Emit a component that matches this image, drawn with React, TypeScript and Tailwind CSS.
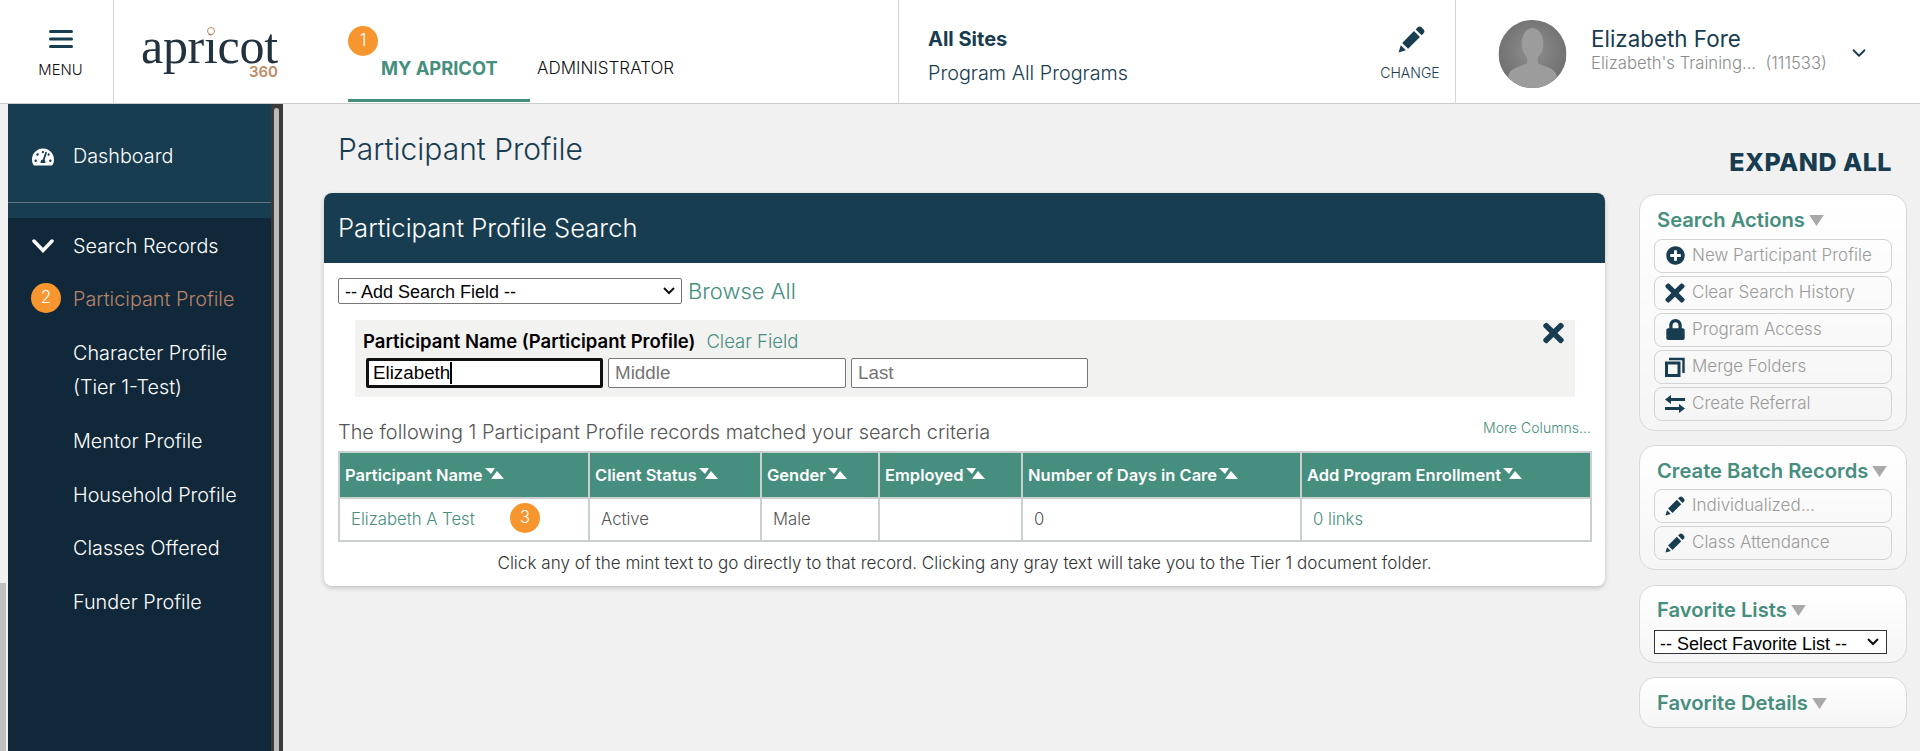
import React from "react";
import { FaLock, FaPlusCircle, FaTachometerAlt, FaTimes } from "react-icons/fa";
import { LuChevronDown } from "react-icons/lu";

const Badge = ({ n, className = "" }: { n: number; className?: string }) => (
  <span className={`flex h-[30px] w-[30px] shrink-0 items-center justify-center rounded-full bg-[#f7962f] text-[17px] font-light text-white ${className}`}>
    {n}
  </span>
);

const SortIcon = () => (
  <svg viewBox="0 0 19 11" className="ml-[2px] inline-block h-[11px] w-[19px] align-[2px]">
    <polygon points="0,0 10,0 6,6" fill="#fff" />
    <polygon points="12,3 19,11 6,11" fill="#fff" />
  </svg>
);

const Caret = () => (
  <svg viewBox="0 0 16 12" className="ml-[4px] inline-block h-[11px] w-[15px] align-[1px]">
    <polygon points="0,0 16,0 8,12" fill="#a9a9a9" />
  </svg>
);

const PencilIcon = ({ className = "" }: { className?: string }) => (
  <svg viewBox="0 0 24 24" className={className} fill="#183c50">
    <polygon points="0.500,23.500 2.500,17 7,21.500" />
    <polygon points="3.700,15 14.200,4.500 19.500,9.800 9,20.300" />
    <path d="M15.700 3l1.800-1.800c1-1 2.400-1 3.300 0l2 2c1 1 1 2.300 0 3.300l-1.800 1.800z" />
  </svg>
);

const MergeIcon = () => (
  <svg viewBox="0 0 20 20" className="h-[20px] w-[20px]" fill="none" stroke="#183c50">
    <path d="M4 2h14.500v14" strokeWidth="2.400" />
    <rect x="1.500" y="6" width="12.500" height="12.500" strokeWidth="3" />
  </svg>
);

const SwapIcon = () => (
  <svg viewBox="0 0 20 20" className="h-[20px] w-[20px]" fill="#183c50">
    <path d="M6 1v3h14v3H6v3L0 5.500z" />
    <path d="M14 10v3H0v3h14v3l6-4.500z" />
  </svg>
);

const SelectChevron = ({ className = "" }: { className?: string }) => (
  <svg viewBox="0 0 12 8" className={`pointer-events-none absolute h-[8px] w-[12px] ${className}`} fill="none" stroke="#111" strokeWidth="2">
    <polyline points="1,1 6,6 11,1" />
  </svg>
);

const Avatar = () => (
  <svg viewBox="0 0 69 69" className="h-[68px] w-[69px] shrink-0">
    <defs>
      <radialGradient id="av" cx="50%" cy="45%" r="60%">
        <stop offset="0%" stopColor="#8e8e8e" />
        <stop offset="100%" stopColor="#6d6d6d" />
      </radialGradient>
      <clipPath id="avc">
        <circle cx="34.500" cy="34.500" r="34.500" />
      </clipPath>
    </defs>
    <g clipPath="url(#avc)">
      <rect width="69" height="69" fill="url(#av)" />
      <ellipse cx="34.500" cy="24" rx="11" ry="16" fill="#9c9c9c" />
      <path d="M29 36h11v8c6 3 17 5 19 12v13H10V56c2-7 13-9 19-12z" fill="#9c9c9c" />
    </g>
  </svg>
);

const Logo = () => (
  <div className="relative h-[50px] w-[137px]">
    <span className="absolute left-0 top-0 font-['Liberation_Serif',serif] text-[50px] leading-[38px] tracking-[-0.3px] text-[#22333f]">apricot</span>
    <span className="absolute left-[66px] top-0 h-[8px] w-[8px] rounded-full border-[1.500px] border-[#c08a63] bg-white" />
    <span className="absolute right-0 top-[39px] text-[15px] font-semibold leading-[11px] text-[#c08a63]">360</span>
  </div>
);

const TopBar = () => (
  <header className="flex h-[104px] shrink-0 border-b border-[#cccccc] bg-white pl-2 font-['Inter',sans-serif]">
    <div className="flex w-[106px] flex-col items-center border-r border-[#d5d5d5] pt-[30px]">
      <svg viewBox="0 0 24 18" className="h-[18px] w-[24px]" fill="#183c50">
        <rect width="24" height="3" rx="1.500" />
        <rect y="7.500" width="24" height="3" rx="1.500" />
        <rect y="15" width="24" height="3" rx="1.500" />
      </svg>
      <span className="mt-[13px] text-[14.800px] font-light leading-[18px] text-[#111]">MENU</span>
    </div>
    <div className="flex w-[234px] pl-[27px] pt-[27px]">
      <Logo />
    </div>
    <nav className="relative flex w-[550px] items-start">
      <div className="h-[102px] w-[182px] border-b-[3px] border-[#468e7d] pl-[33px] pt-[58px] text-[18.300px] font-bold leading-[20px] text-[#468e7d]">MY APRICOT</div>
      <Badge n={1} className="absolute left-0 top-[26px]" />
      <div className="pl-[7px] pt-[58px] text-[17px] font-light leading-[20px] text-[#111]">ADMINISTRATOR</div>
    </nav>
    <div className="flex h-[103px] w-[558px] border-x border-[#d5d5d5] pl-[29px] pr-[15px] text-[#183c50]">
      <div className="flex-1">
        <div className="pt-[28px] text-[20px] font-bold leading-[22px]">All Sites</div>
        <div className="pt-[12px] text-[19.800px] font-light leading-[22px]">Program All Programs</div>
      </div>
      <div className="flex w-[60px] flex-col items-center pt-[26px]">
        <PencilIcon className="ml-[3px] h-[27px] w-[27px]" />
        <span className="mt-[11px] text-[14px] font-light leading-[18px]">CHANGE</span>
      </div>
    </div>
    <div className="flex flex-1 items-start pl-[42px] pt-[20px]">
      <Avatar />
      <div className="ml-[24px] w-[259px]">
        <div className="pt-[6px] text-[22.400px] leading-[26px] text-[#183c50]">Elizabeth Fore</div>
        <div className="pt-[1px] text-[16.700px] font-light leading-[20px] text-[#8c8c8c]">Elizabeth's Training...&nbsp; (111533)</div>
      </div>
      <LuChevronDown className="ml-[-2px] mt-[22px] h-[22px] w-[22px] text-[#183c50]" />
    </div>
  </header>
);

const navItems = ["Mentor Profile", "Household Profile", "Classes Offered", "Funder Profile"];

const Sidebar = () => (
  <aside className="flex w-[275px] shrink-0 bg-[#3a3a3a] font-['Inter',sans-serif] text-[19.800px] font-light text-white">
    <div className="flex w-[263px] flex-col bg-[#10283a]">
      <div className="h-[114px] bg-[#183c50]">
        <div className="flex h-[99px] items-center border-b border-[#62757f] pl-[24px] pt-[7px]">
          <FaTachometerAlt className="h-[20px] w-[22px]" />
          <span className="ml-[19px]">Dashboard</span>
        </div>
      </div>
      <div className="flex h-[56px] items-center pl-[24px]">
        <svg viewBox="0 0 22 14" className="h-[14px] w-[22px]" fill="none" stroke="#fff" strokeWidth="3.500" strokeLinecap="round">
          <polyline points="2,2 11,11.500 20,2" />
        </svg>
        <span className="ml-[19px] leading-[26px]">Search Records</span>
      </div>
      <div className="flex items-center pl-[23px] pt-[6px] text-[#b98468]">
        <Badge n={2} className="mb-[3px]" />
        <span className="ml-[12px] leading-[38px]">Participant Profile</span>
      </div>
      <div className="pl-[65px] pt-[18px] leading-[34px]">
        Character Profile
        <br />
        (Tier 1-Test)
      </div>
      <ul className="pl-[65px] pt-[18px] leading-[38px]">
        {navItems.map((label) => (
          <li key={label} className="mb-[15.500px]">
            {label}
          </li>
        ))}
      </ul>
    </div>
    <div className="ml-[3px] mt-[4px] h-full w-[5px] rounded-t-full bg-[#bbbbbb]" />
  </aside>
);

const columns = [
  { title: "Participant Name", w: "w-[250px]" },
  { title: "Client Status", w: "w-[172px]" },
  { title: "Gender", w: "w-[118px]" },
  { title: "Employed", w: "w-[143px]" },
  { title: "Number of Days in Care", w: "w-[279px]" },
  { title: "Add Program Enrollment", w: "w-[290px]" },
];

const SearchCard = () => (
  <section className="ml-[16px] h-[393px] w-[1281px] overflow-hidden rounded-[8px] bg-white shadow-[0_2px_5px_rgba(0,0,0,0.2)]">
    <div className="flex h-[70px] items-center bg-[#183c50] pl-[14px] text-[25.600px] font-light text-white">Participant Profile Search</div>
    <div className="px-[14px] pt-[15px]">
      <div className="flex items-center">
        <div className="relative h-[26px] w-[344px]">
          <select className="h-full w-full appearance-none rounded-[2px] border border-[#767676] bg-white pl-[6px] font-['Liberation_Sans',sans-serif] text-[18px] text-black">
            <option>-- Add Search Field --</option>
          </select>
          <SelectChevron className="right-[7px] top-[9px]" />
        </div>
        <a className="ml-[6px] text-[22px] font-light leading-[26px] text-[#468e7d]">Browse All</a>
      </div>
      <div className="relative ml-[17px] mt-[16px] h-[77px] w-[1220px] bg-[#f2f2f1] pl-[8px] pt-[10px]">
        <div className="flex h-[22px] items-center text-[18.500px] leading-[22px]">
          <span className="font-semibold text-black">Participant Name (Participant Profile)</span>
          <a className="ml-[11px] font-light text-[#468e7d]">Clear Field</a>
        </div>
        <div className="mt-[6px] flex gap-[5px] pl-[3px] font-['Liberation_Sans',sans-serif] text-[18.800px]">
          <div className="flex h-[30px] w-[237px] items-center rounded-[2px] border-[3px] border-[#111] bg-white pl-[4px] text-black">
            Elizabeth<span className="h-[22px] w-[1.500px] bg-black" />
          </div>
          <input placeholder="Middle" className="h-[30px] w-[238px] rounded-[2px] border border-[#767676] bg-white pl-[6px] placeholder:text-[#757575]" />
          <input placeholder="Last" className="h-[30px] w-[237px] rounded-[2px] border border-[#767676] bg-white pl-[6px] placeholder:text-[#757575]" />
        </div>
        <FaTimes className="absolute right-[11px] top-[-2px] h-[30px] w-[21px] text-[#183c50]" />
      </div>
      <div className="mb-[4px] mt-[20px] flex items-end justify-between">
        <span className="text-[19.900px] font-light leading-[30px] text-[#555]">The following 1 Participant Profile records matched your search criteria</span>
        <a className="pb-[11px] text-[14.100px] font-light leading-[16px] text-[#468e7d]">More Columns...</a>
      </div>
      <table className="w-[1252px] table-fixed border-collapse text-[16.700px]">
        <thead>
          <tr className="h-[46px] bg-[#468e7d] text-left text-white">
            {columns.map((c) => (
              <th key={c.title} className={`${c.w} border-2 border-[#c9d0ce] pl-[5px] text-[16.500px] font-semibold`}>
                {c.title}
                <SortIcon />
              </th>
            ))}
          </tr>
        </thead>
        <tbody>
          <tr className="h-[43px] font-light text-[#555]">
            <td className="relative border-2 border-[#c9d0ce] pl-[11px] text-[#468e7d]">
              Elizabeth A Test
              <Badge n={3} className="absolute left-[170px] top-[4px]" />
            </td>
            <td className="border-2 border-[#c9d0ce] pl-[11px]">Active</td>
            <td className="border-2 border-[#c9d0ce] pl-[11px]">Male</td>
            <td className="border-2 border-[#c9d0ce]" />
            <td className="border-2 border-[#c9d0ce] pl-[11px]">0</td>
            <td className="border-2 border-[#c9d0ce] pl-[11px] text-[#468e7d]">0 links</td>
          </tr>
        </tbody>
      </table>
      <p className="pt-[10px] text-center text-[17.100px] font-light leading-[22px] text-[#333]">
        Click any of the mint text to go directly to that record. Clicking any gray text will take you to the Tier 1 document folder.
      </p>
    </div>
  </section>
);

const ActionButton = ({ icon, label }: { icon: React.ReactNode; label: string }) => (
  <div className="flex h-[34px] items-center rounded-[8px] border border-[#d3d3d3] pl-[10px] text-[17px] font-light text-[#9a9a9a]">
    <span className="flex h-[24px] w-[20px] items-center justify-center text-[#183c50]">{icon}</span>
    <span className="ml-[7px]">{label}</span>
  </div>
);

const Panel = ({ title, children, className = "" }: { title: string; children?: React.ReactNode; className?: string }) => (
  <div className={`rounded-[16px] border border-[#d9d9d9] bg-gradient-to-b from-white to-[#f5f5f5] px-[14px] ${className}`}>
    <h3 className="pl-[3px] text-[20.200px] font-semibold leading-[24px] text-[#468e7d]">
      {title}
      <Caret />
    </h3>
    {children}
  </div>
);

const RightRail = () => (
  <div className="ml-[34px] mt-[1px] w-[268px]">
    <Panel title="Search Actions" className="h-[237px] pt-[13px]">
      <div className="mt-[6.500px] flex flex-col gap-[3px]">
        <ActionButton icon={<FaPlusCircle className="h-[19px] w-[19px]" />} label="New Participant Profile" />
        <ActionButton icon={<FaTimes className="h-[28px] w-[20px] shrink-0" />} label="Clear Search History" />
        <ActionButton icon={<FaLock className="h-[21px] w-[19px]" />} label="Program Access" />
        <ActionButton icon={<MergeIcon />} label="Merge Folders" />
        <ActionButton icon={<SwapIcon />} label="Create Referral" />
      </div>
    </Panel>
    <Panel title="Create Batch Records" className="mt-[14px] h-[125px] pt-[13px]">
      <div className="mt-[6px] flex flex-col gap-[3px]">
        <ActionButton icon={<PencilIcon className="h-[20px] w-[20px]" />} label="Individualized..." />
        <ActionButton icon={<PencilIcon className="h-[20px] w-[20px]" />} label="Class Attendance" />
      </div>
    </Panel>
    <Panel title="Favorite Lists" className="mt-[15px] h-[78px] pt-[12px]">
      <div className="relative mt-[8px] h-[24px] w-[233px]">
        <select className="h-full w-full appearance-none border border-[#333] bg-white pl-[5px] font-['Liberation_Sans',sans-serif] text-[18px] text-black">
          <option>-- Select Favorite List --</option>
        </select>
        <SelectChevron className="right-[8px] top-[8px]" />
      </div>
    </Panel>
    <Panel title="Favorite Details" className="mt-[14px] h-[51px] pt-[13px]" />
  </div>
);

const Main = () => (
  <main className="flex-1 overflow-hidden font-['Inter',sans-serif]">
    <div className="flex items-start justify-between pr-[28px]">
      <h1 className="pl-[55px] pt-[28px] text-[30px] font-light leading-[34px] text-[#183c50]">Participant Profile</h1>
      <a className="pt-[44px] text-[25px] font-extrabold leading-[28px] tracking-[0.5px] text-[#183c50]">EXPAND ALL</a>
    </div>
    <div className="mt-[17px] flex items-start pl-[25px]">
      <SearchCard />
      <RightRail />
    </div>
  </main>
);

export default function App() {
  return (
    <div className="flex h-[751px] flex-col overflow-hidden bg-[#f1f1f1]">
      <TopBar />
      <div className="flex min-h-0 flex-1">
        <div className="flex w-2 shrink-0 flex-col justify-end">
          <div className="h-[168px] w-[6px] bg-[#c0c0c0]" />
        </div>
        <Sidebar />
        <Main />
      </div>
    </div>
  );
}
